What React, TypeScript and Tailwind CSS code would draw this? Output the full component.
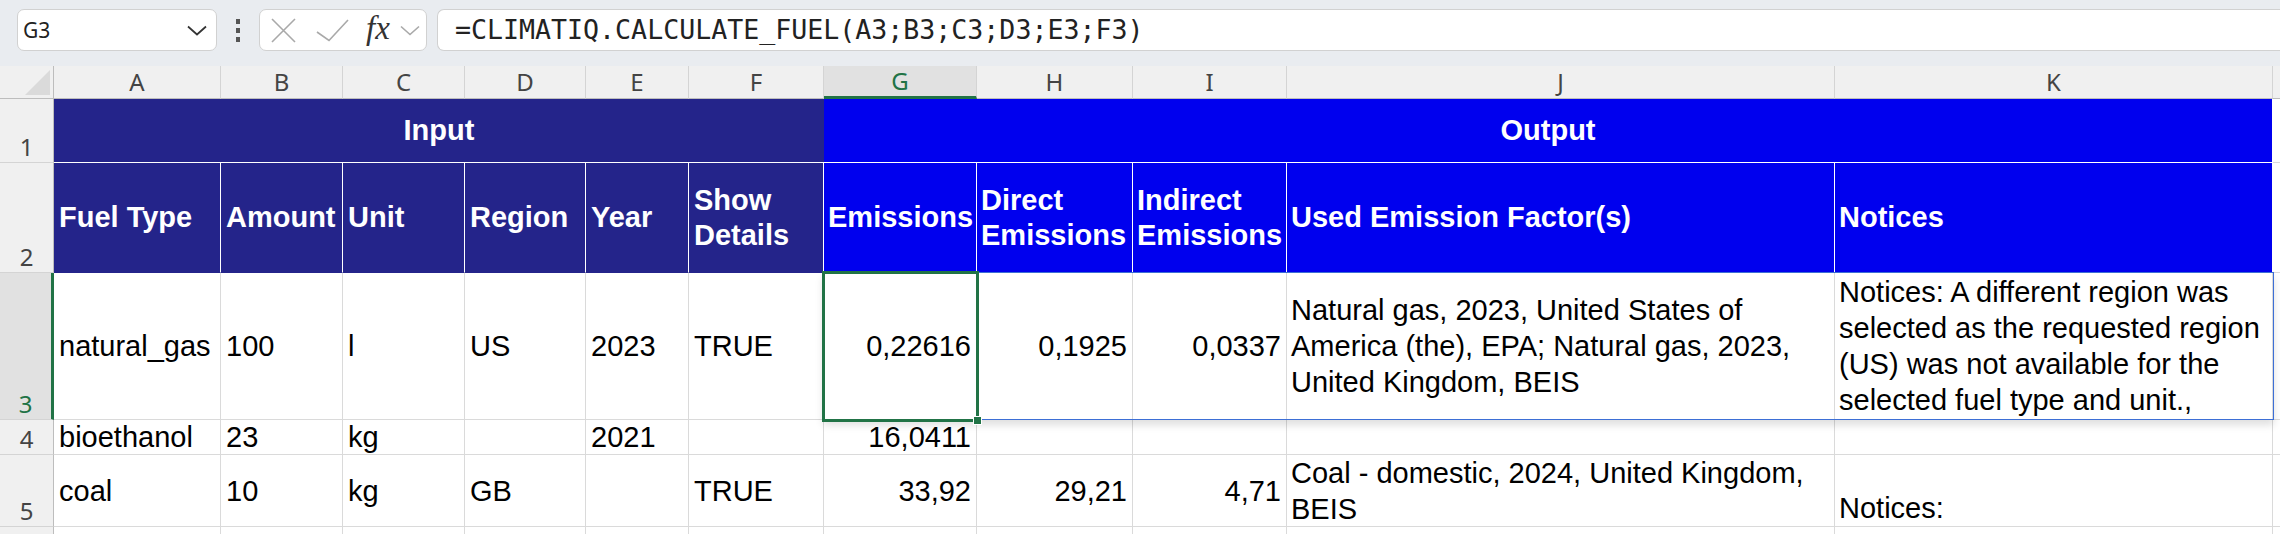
import React from "react";

const BODY = "font-['Liberation_Sans',Arial,sans-serif] text-[29px] text-black leading-[36px]";
const HEAD = "font-['Liberation_Sans',Arial,sans-serif] text-[29px] font-bold text-white leading-[35px]";

function ColHead({ label, active = false }: { label: string; active?: boolean }) {
  return (
    <div
      className={
        active
          ? "flex items-center justify-center bg-[#e1e1e1] border-r border-[#d4d4d4] border-b-[3px] border-b-[#217346] text-[#217346] font-['Noto_Sans',sans-serif] text-[24px] leading-none"
          : "flex items-center justify-center bg-[#f0f0f0] border-r border-[#d4d4d4] border-b border-b-[#bdbdbd] text-[#444] font-['Noto_Sans',sans-serif] text-[24px] leading-none"
      }
    >
      {label}
    </div>
  );
}

function RowHead({ n, active = false }: { n?: number; active?: boolean }) {
  return (
    <div
      className={
        active
          ? "flex items-end justify-center pb-[3px] bg-[#e1e1e1] border-r-[3px] border-r-[#217346] border-b border-b-[#d4d4d4] text-[#217346] font-['Noto_Sans',sans-serif] text-[24px] leading-none"
          : "flex items-end justify-center pb-[3px] bg-[#f0f0f0] border-r border-r-[#bdbdbd] border-b border-b-[#d4d4d4] text-[#444] font-['Noto_Sans',sans-serif] text-[24px] leading-none"
      }
    >
      {n}
    </div>
  );
}

function Txt({ children }: { children?: React.ReactNode }) {
  return (
    <div className={"flex items-center px-[5px] border-r border-b border-[#dadada] whitespace-nowrap overflow-hidden " + BODY}>
      {children}
    </div>
  );
}

function Num({ children }: { children?: React.ReactNode }) {
  return (
    <div className={"flex items-center justify-end px-[5px] border-r border-b border-[#dadada] whitespace-nowrap overflow-hidden " + BODY}>
      {children}
    </div>
  );
}

function Multi({ lines, bottom = false }: { lines: string[]; bottom?: boolean }) {
  return (
    <div
      className={
        (bottom ? "flex flex-col justify-end" : "flex flex-col justify-center") +
        " px-[4px] border-r border-b border-[#dadada] whitespace-nowrap overflow-hidden " +
        BODY
      }
    >
      {lines.map((l, i) => (
        <div key={i}>{l}</div>
      ))}
    </div>
  );
}

function NavyHead({ lines }: { lines: string[] }) {
  return (
    <div className={"flex flex-col justify-center px-[5px] bg-[#24248a] border-r border-r-white border-b border-b-[#24248a] whitespace-nowrap " + HEAD}>
      {lines.map((l, i) => (
        <div key={i}>{l}</div>
      ))}
    </div>
  );
}

function BlueHead({ lines }: { lines: string[] }) {
  return (
    <div className={"flex flex-col justify-center px-[4px] bg-[#0000ee] border-r border-r-white border-b border-b-[#3d6fd6] whitespace-nowrap " + HEAD}>
      {lines.map((l, i) => (
        <div key={i}>{l}</div>
      ))}
    </div>
  );
}

function Toolbar() {
  return (
    <div className="h-[66px] bg-[#e9ecf0] flex items-start pt-[9px] pl-[17px]">
      <div className="w-[200px] h-[42px] bg-white border border-[#d1d1d1] rounded-[7px] flex items-center justify-between pl-[5px] pr-[9px]">
        <span className="font-['Noto_Sans',sans-serif] text-[21px] text-[#222] leading-none">G3</span>
        <svg width="20" height="11" viewBox="0 0 20 11">
          <path d="M1 1.5 L10 9.5 L19 1.5" fill="none" stroke="#333" strokeWidth="1.7" />
        </svg>
      </div>
      <div className="w-[42px] h-[42px] flex flex-col items-center justify-center gap-[4px]">
        <div className="w-[4px] h-[5px] bg-[#555]" />
        <div className="w-[4px] h-[5px] bg-[#555]" />
        <div className="w-[4px] h-[5px] bg-[#555]" />
      </div>
      <div className="w-[168px] h-[42px] bg-white border border-[#d1d1d1] rounded-[7px] flex items-center pl-[11px]">
        <svg width="25" height="25" viewBox="0 0 25 25">
          <path d="M1 1 L24 24 M24 1 L1 24" stroke="#a9a9a9" strokeWidth="1.6" fill="none" />
        </svg>
        <svg width="33" height="23" viewBox="0 0 33 23" className="ml-[20px]">
          <path d="M1 13 L13 21.5 L32 1" stroke="#a9a9a9" strokeWidth="1.6" fill="none" />
        </svg>
        <span className="ml-[17px] font-['Liberation_Serif',serif] italic text-[33px] text-[#333] leading-none -mt-[4px]">fx</span>
        <svg width="20" height="11" viewBox="0 0 20 11" className="ml-[10px]">
          <path d="M1 1.5 L10 9.5 L19 1.5" fill="none" stroke="#a9a9a9" strokeWidth="1.6" />
        </svg>
      </div>
      <div className="ml-[10px] flex-1 h-[42px] bg-white border border-[#d1d1d1] rounded-l-[7px] border-r-0 flex items-center pl-[17px]">
        <span className="font-['DejaVu_Sans_Mono',monospace] text-[26.6px] text-[#222] leading-none whitespace-nowrap">
          =CLIMATIQ.CALCULATE_FUEL(A3;B3;C3;D3;E3;F3)
        </span>
      </div>
    </div>
  );
}

export default function App() {
  return (
    <div className="w-[2280px] h-[534px] overflow-hidden bg-white relative">
      <Toolbar />
      <div className="relative">
        <div className="grid grid-cols-[54px_167px_122px_122px_121px_103px_135px_153px_156px_154px_548px_438px_1fr] grid-rows-[33px_64px_110px_147px_35px_72px_40px]">
          {/* column headers */}
          <div className="relative bg-[#f0f0f0] border-r border-r-[#bdbdbd] border-b border-b-[#bdbdbd]">
            <svg width="26" height="26" viewBox="0 0 26 26" className="absolute left-[25px] top-[4px]">
              <path d="M25 0 L25 25 L0 25 Z" fill="#dadada" />
            </svg>
          </div>
          <ColHead label="A" />
          <ColHead label="B" />
          <ColHead label="C" />
          <ColHead label="D" />
          <ColHead label="E" />
          <ColHead label="F" />
          <ColHead label="G" active />
          <ColHead label="H" />
          <ColHead label="I" />
          <ColHead label="J" />
          <ColHead label="K" />
          <div className="bg-[#f0f0f0] border-b border-b-[#bdbdbd]" />

          {/* row 1 */}
          <RowHead n={1} />
          <div className={"col-span-6 flex items-center justify-center bg-[#24248a] border-b border-b-white " + HEAD}>Input</div>
          <div className={"col-span-5 flex items-center justify-center bg-[#0000ee] border-b border-b-white border-r border-r-white " + HEAD}>Output</div>
          <div className="border-b border-[#dadada]" />

          {/* row 2 */}
          <RowHead n={2} />
          <NavyHead lines={["Fuel Type"]} />
          <NavyHead lines={["Amount"]} />
          <NavyHead lines={["Unit"]} />
          <NavyHead lines={["Region"]} />
          <NavyHead lines={["Year"]} />
          <NavyHead lines={["Show", "Details"]} />
          <BlueHead lines={["Emissions"]} />
          <BlueHead lines={["Direct", "Emissions"]} />
          <BlueHead lines={["Indirect", "Emissions"]} />
          <BlueHead lines={["Used Emission Factor(s)"]} />
          <BlueHead lines={["Notices"]} />
          <div className="border-b border-[#dadada]" />

          {/* row 3 */}
          <RowHead n={3} active />
          <Txt>natural_gas</Txt>
          <Txt>100</Txt>
          <Txt>l</Txt>
          <Txt>US</Txt>
          <Txt>2023</Txt>
          <Txt>TRUE</Txt>
          <Num>0,22616</Num>
          <Num>0,1925</Num>
          <Num>0,0337</Num>
          <Multi lines={["Natural gas, 2023, United States of", "America (the), EPA; Natural gas, 2023,", "United Kingdom, BEIS"]} />
          <Multi
            lines={[
              "Notices: A different region was",
              "selected as the requested region",
              "(US) was not available for the",
              "selected fuel type and unit.,",
            ]}
          />
          <div className="border-b border-[#dadada]" />

          {/* row 4 */}
          <RowHead n={4} />
          <Txt>bioethanol</Txt>
          <Txt>23</Txt>
          <Txt>kg</Txt>
          <Txt />
          <Txt>2021</Txt>
          <Txt />
          <Num>16,0411</Num>
          <Num />
          <Num />
          <Txt />
          <Txt />
          <div className="border-b border-[#dadada]" />

          {/* row 5 */}
          <RowHead n={5} />
          <Txt>coal</Txt>
          <Txt>10</Txt>
          <Txt>kg</Txt>
          <Txt>GB</Txt>
          <Txt />
          <Txt>TRUE</Txt>
          <Num>33,92</Num>
          <Num>29,21</Num>
          <Num>4,71</Num>
          <Multi lines={["Coal - domestic, 2024, United Kingdom,", "BEIS"]} />
          <Multi lines={["Notices:"]} bottom />
          <div className="border-b border-[#dadada]" />

          {/* row 6 (only a sliver is visible) */}
          <RowHead />
          <Txt />
          <Txt />
          <Txt />
          <Txt />
          <Txt />
          <Txt />
          <Txt />
          <Txt />
          <Txt />
          <Txt />
          <Txt />
          <div />
        </div>

        {/* spill range border + shadow */}
        <div className="absolute left-[823px] top-[206px] w-[1451px] h-[148px] border border-[#3d6fd6] shadow-[0_5px_8px_rgba(0,0,0,0.13)] pointer-events-none" />
        {/* active cell selection */}
        <div className="absolute left-[822px] top-[205px] w-[157px] h-[151px] border-[3px] border-[#217346] pointer-events-none" />
        {/* fill handle */}
        <div className="absolute left-[973px] top-[350px] w-[9px] h-[9px] bg-[#217346] border border-white pointer-events-none" />
      </div>
    </div>
  );
}
